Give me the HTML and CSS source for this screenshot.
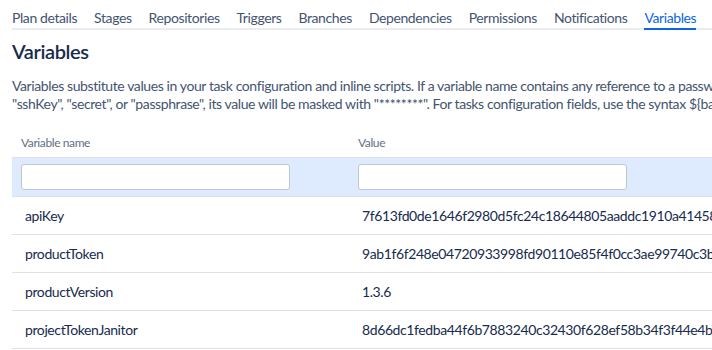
FILE: index.html
```html
<!DOCTYPE html>
<html lang="en">

<head>
    <meta charset="UTF-8">
    <meta name="viewport" content="width=device-width, initial-scale=1.0">
    <title>Plan configuration - Variables</title>
    <link rel="stylesheet" href="styles.css">
</head>

<body>
    <div class="page">
        <nav class="tabs">
            <a class="tab" href="#">Plan details</a>
            <a class="tab" href="#">Stages</a>
            <a class="tab" href="#">Repositories</a>
            <a class="tab" href="#">Triggers</a>
            <a class="tab" href="#">Branches</a>
            <a class="tab" href="#">Dependencies</a>
            <a class="tab" href="#">Permissions</a>
            <a class="tab" href="#">Notifications</a>
            <a class="tab tab-active" href="#">Variables</a>
            <a class="tab" href="#">Miscellaneous</a>
        </nav>

        <h1>Variables</h1>

        <p class="intro">Variables substitute values in your task configuration and inline scripts. If a variable name contains any reference to a password,<br>"sshKey", "secret", or "passphrase", its value will be masked with "********". For tasks configuration fields, use the syntax ${bamboo.myvariablename}. For inline scripts, use the syntax ${bamboo_myvariablename}.</p>

        <table class="vars">
            <thead>
                <tr>
                    <th class="col-name">Variable name</th>
                    <th>Value</th>
                </tr>
            </thead>
            <tbody>
                <tr class="filter-row">
                    <td><input type="text" class="text-input"></td>
                    <td><input type="text" class="text-input"></td>
                </tr>
                <tr>
                    <td><span class="cell">apiKey</span></td>
                    <td><span class="cell">7f613fd0de1646f2980d5fc24c18644805aaddc1910a4145823f24e6a1c0e2b1</span></td>
                </tr>
                <tr>
                    <td><span class="cell">productToken</span></td>
                    <td><span class="cell">9ab1f6f248e04720933998fd90110e85f4f0cc3ae99740c3b978c1d2a7e3f0b4</span></td>
                </tr>
                <tr>
                    <td><span class="cell">productVersion</span></td>
                    <td><span class="cell">1.3.6</span></td>
                </tr>
                <tr>
                    <td><span class="cell">projectTokenJanitor</span></td>
                    <td><span class="cell">8d66dc1fedba44f6b7883240c32430f628ef58b34f3f44e4b6ff8529c0d1e7a3</span></td>
                </tr>
            </tbody>
        </table>
    </div>
</body>

</html>
```

FILE: styles.css
```css
html,
body {
    margin: 0;
    overflow: hidden;
}

body {
    font-family: Lato, 'Segoe UI', sans-serif;
    font-size: 14px;
    letter-spacing: -0.4px;
    color: #172b4d;
    background-color: white;
}

.page {
    width: 1400px;
    padding: 0 12px;
}

.tabs {
    display: flex;
    gap: 17px;
    padding-top: 8px;
    border-bottom: 2px solid #ebecf0;
}

.tab {
    color: #44546f;
    text-decoration: none;
    line-height: 20px;
    margin-bottom: -2px;
    border-bottom: 2px solid transparent;
    white-space: nowrap;
}

.tab-active {
    color: #0c66e4;
    border-bottom-color: #0c66e4;
}

h1 {
    font-size: 20px;
    font-weight: 600;
    line-height: 24px;
    margin: 9px 0 0;
    color: #172b4d;
}

.intro {
    color: #44546f;
    line-height: 18px;
    margin: 14px 0 0;
}

.vars {
    border-collapse: collapse;
    margin-top: 18px;
    width: 1000px;
}

.vars th {
    text-align: left;
    font-size: 12px;
    font-weight: normal;
    color: #626f86;
    padding: 4px 9px 6px;
    line-height: 16px;
    border-bottom: 1px solid #dfe1e6;
}

.vars .col-name {
    width: 319px;
}

.vars td {
    padding: 0 9px;
    height: 37px;
    border-bottom: 1px solid #dfe1e6;
    white-space: nowrap;
}

.filter-row td {
    background-color: #deebff;
    height: 38px;
}

.text-input {
    display: block;
    box-sizing: border-box;
    width: 269px;
    height: 26px;
    border: 1px solid #c1c7d0;
    border-radius: 3px;
    background-color: white;
    font-family: inherit;
    font-size: 14px;
}

.cell {
    padding-left: 4px;
}
```
